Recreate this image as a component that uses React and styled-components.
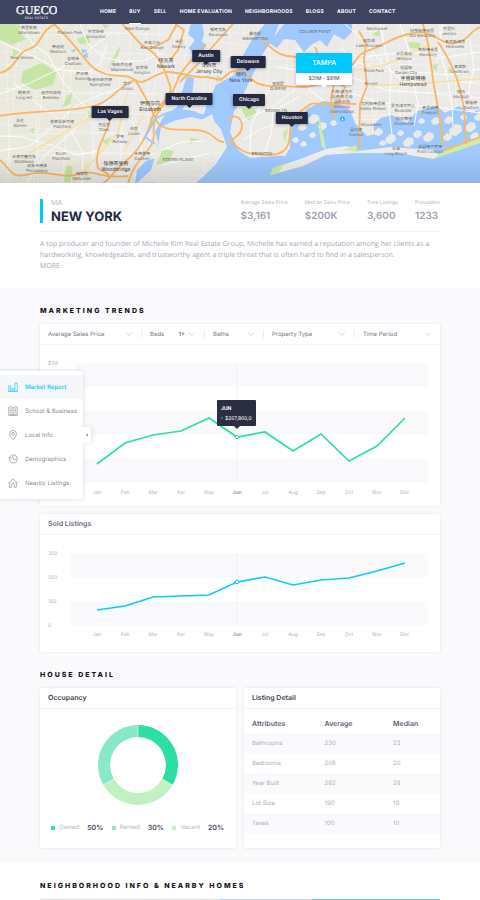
import React from "react";
import styled, { createGlobalStyle, css } from "styled-components";

const GlobalStyle = createGlobalStyle`
  * { box-sizing: border-box; }
  body {
    margin: 0;
    background: #fff;
    color: #23273f;
    font-family: Inter, "Noto Sans CJK SC", sans-serif;
    font-size: 7px;
    text-rendering: geometricPrecision;
  }
  h1, h2, h3, p, dl, dd, ul { margin: 0; padding: 0; }
  button, select { font-family: inherit; text-rendering: inherit; }
`;

const Page = styled.div`
  position: relative;
  overflow: hidden;
`;

const Header = styled.header`
  display: flex;
  align-items: center;
  height: 24px;
  padding: 0 16px;
  background: #3e435f;
`;

const Logo = styled.a`
  display: block;
  width: 41px;
  height: 18px;
  margin-right: 43px;
  svg { display: block; }
`;

const Nav = styled.nav`
  display: flex;
  align-self: stretch;
  gap: 13px;
`;

const NavLink = styled.a`
  display: flex;
  align-items: center;
  color: #fff;
  font-size: 5px;
  font-weight: 700;
  letter-spacing: 0.05em;
  text-decoration: none;
  white-space: nowrap;
  box-shadow: ${(p) => (p.$active ? "inset 0 -1px #fff" : "none")};
`;

const MapArea = styled.section`
  position: relative;
  height: 159px;
  > svg { display: block; width: 100%; height: 100%; }
`;

const Pin = styled.button`
  position: absolute;
  left: ${(p) => p.$left}%;
  top: ${(p) => p.$top}px;
  transform: translateX(-50%);
  height: 12px;
  padding: 0 6px;
  border: 0;
  border-radius: 1px;
  background: #262a40;
  color: #fff;
  font-size: 5px;
  font-weight: 600;
  line-height: 12px;
  white-space: nowrap;
  box-shadow: 0 1px 3px rgba(20, 24, 50, 0.3);
  &::after {
    content: "";
    position: absolute;
    left: calc(50% - 3px);
    top: 100%;
    border: 3px solid transparent;
    border-top-color: #262a40;
    border-bottom: 0;
  }
`;

const FeaturePin = styled(Pin)`
  width: 56px;
  height: 32px;
  padding: 0;
  background: #fff;
  color: #555a70;
  font-weight: 500;
  &::after { border-top-color: #fff; }
  strong {
    display: block;
    height: 20px;
    border-radius: 1px 1px 0 0;
    background: #00c8ff;
    color: #fff;
    font-size: 7px;
    font-weight: 500;
    line-height: 20px;
  }
`;

const Intro = styled.section`
  height: 105px;
  padding: 16px 40px 0;
`;

const IntroTop = styled.div`
  display: flex;
  justify-content: space-between;
  height: 33px;
  border-bottom: 1px solid #f3f3f6;
`;

const Place = styled.div`
  height: 24px;
  padding-left: 8px;
  border-left: 3px solid #00c8ff;
  color: #b9bcc7;
  line-height: 8px;
  h1 {
    color: #23273f;
    font-size: 13px;
    font-weight: 700;
    line-height: 20px;
  }
`;

const Stats = styled.dl`
  display: flex;
  gap: 17px;
`;

const Stat = styled.div`
  dt { color: #b4b7c2; font-size: 5px; line-height: 8px; }
  dd { color: #9c9fae; font-size: 10px; font-weight: 600; line-height: 18px; }
`;

const Bio = styled.p`
  padding-top: 7px;
  color: #a5a8b5;
  font-family: "Open Sans", sans-serif;
  line-height: 11px;
`;

const MoreLink = styled.a`
  display: block;
  color: inherit;
  text-decoration: none;
`;

const Content = styled.main`
  padding: 0 40px 15px;
  background: #fafafc;
`;

const SectionTitle = styled.h2`
  padding: 15px 0 5px;
  color: #14151c;
  font-size: 7px;
  font-weight: 800;
  letter-spacing: 2px;
  line-height: 16px;
`;

const Card = styled.section`
  min-width: 0;
  border-radius: 2px;
  background: #fff;
  box-shadow: 0 0 3px rgba(60, 66, 110, 0.12);
  & + & { margin-top: 8px; }
  > svg { display: block; width: 100%; }
`;

const CardTitle = styled.h3`
  height: 21px;
  padding: 0 8px;
  border-bottom: 1px solid #f4f4f7;
  color: ${(p) => (p.$soft ? "#686c82" : "#3c4158")};
  font-size: 7px;
  font-weight: 600;
  line-height: 20px;
`;

const Filters = styled.form`
  display: grid;
  grid-template-columns: 101fr 63fr 59fr 91fr 86fr;
  align-items: center;
  height: 21px;
  border-bottom: 1px solid #f4f4f7;
`;

const Filter = styled.label`
  display: flex;
  align-items: center;
  min-width: 0;
  height: 8px;
  padding: 0 8px;
  color: #747889;
  font-size: 6px;
  & + & { border-left: 1px solid #eeeef2; }
  svg { flex: none; }
`;

const Select = styled.select`
  flex: 1;
  min-width: 0;
  padding: 0;
  border: 0;
  outline-offset: 2px;
  background: transparent;
  color: inherit;
  font-size: 6px;
  font-weight: ${(p) => (p.$strong ? 600 : 400)};
  text-align: ${(p) => (p.$strong ? "right" : "left")};
  appearance: none;
  ${(p) => p.$strong && css`margin-right: 3px;`}
`;

const ChartText = styled.text`
  fill: ${(p) => (p.$strong ? "#8e92a2" : "#b2b5c1")};
  font-size: 5px;
  font-weight: ${(p) => (p.$strong ? 600 : 400)};
`;

const TipText = styled.text`
  fill: #fff;
  font-size: 5px;
  font-weight: ${(p) => (p.$strong ? 700 : 400)};
`;

const Columns = styled.div`
  display: grid;
  grid-template-columns: 1fr 1fr;
  gap: 8px;
`;

const Panel = styled.section`
  min-width: 0;
  border-radius: 2px;
  background: #fff;
  box-shadow: 0 0 3px rgba(60, 66, 110, 0.12);
`;

const Donut = styled.div`
  display: flex;
  justify-content: center;
  padding: 16px 0 18px;
`;

const Legend = styled.ul`
  display: flex;
  justify-content: space-between;
  padding: 0 12px 15px 11px;
  list-style: none;
`;

const LegendItem = styled.li`
  display: flex;
  align-items: center;
  color: #b4b7c2;
  font-size: 6px;
  line-height: 10px;
  &::before {
    content: "";
    width: 4px;
    height: 4px;
    margin-right: 4px;
    border-radius: 1px;
    background: ${(p) => p.$color};
  }
  strong { margin-left: 8px; color: #454a60; font-size: 7px; font-weight: 600; }
`;

const Table = styled.table`
  width: 100%;
  margin-top: 4px;
  border-collapse: collapse;
  table-layout: fixed;
  th, td { height: 20px; padding: 0 0 0 8px; text-align: left; }
  th { color: #5b5f74; font-size: 7px; font-weight: 600; }
  td { color: #acafbb; font-size: 6px; }
  th:first-child { width: 37%; }
  th:nth-child(2) { width: 35%; }
  tbody tr:nth-child(odd) { background: #fafafc; }
`;

const Nearby = styled.section`
  padding: 0 40px;
`;

const NearbyStrip = styled.div`
  height: 1px;
  background: linear-gradient(90deg, #dcdcdc 0 45%, #b9cdfa 45% 68%, #54d0ef 68%);
`;

const SidePanel = styled.aside`
  position: absolute;
  top: 371px;
  left: 0;
  width: 83px;
  padding: 4px 0;
  border-radius: 0 2px 2px 0;
  background: rgba(255, 255, 255, 0.97);
  box-shadow: 0 0 5px rgba(40, 45, 90, 0.16);
`;

const SideLink = styled.a`
  display: flex;
  align-items: center;
  gap: 7px;
  height: 24px;
  padding-left: 8px;
  background: ${(p) => (p.$active ? "#f6f7fb" : "transparent")};
  color: ${(p) => (p.$active ? "#19ccff" : "#8b8e9e")};
  font-size: 6px;
  font-weight: ${(p) => (p.$active ? 600 : 400)};
  text-decoration: none;
  white-space: nowrap;
`;

const Toggle = styled.button`
  position: absolute;
  top: 56px;
  left: 100%;
  display: flex;
  align-items: center;
  justify-content: center;
  width: 8px;
  height: 16px;
  padding: 0;
  border: 0;
  border-radius: 0 2px 2px 0;
  background: #fff;
  box-shadow: 2px 0 4px rgba(40, 45, 90, 0.1);
`;

const Chevron = () => (
  <svg width="8" height="8" viewBox="0 0 8 8" fill="none" stroke="#c4c6d0" strokeWidth="0.7" aria-hidden="true">
    <path d="M1.2 2.4 4 5.4 6.8 2.4" />
  </svg>
);

const icons = {
  report: (
    <>
      <path d="M1 5h2.4v7H1zM5 8.5h2.4V12H5zM9 1.5h3V12H9z" />
      <path d="M.5 12.5h12" />
    </>
  ),
  school: (
    <>
      <path d="M6.5 2.2C4.8 1 2.8 1 1 1.5v9.3c1.8-.4 3.8-.4 5.5.8 1.7-1.2 3.7-1.2 5.5-.8V1.5C10.2 1 8.2 1 6.5 2.2zM6.5 2.2v9.4" />
      <path d="M2.5 3.8H5M2.5 5.8H5M2.5 8H5M8 3.8h2.5M8 5.8h2.5M8 8h2.5M.4 12.3h12.2" />
    </>
  ),
  local: (
    <>
      <path d="M6.5 12.5C4 9 2 7 2 5a4.5 4.5 0 0 1 9 0c0 2-2 4-4.5 7.5z" />
      <circle cx="6.5" cy="4.9" r="1.8" />
    </>
  ),
  demo: (
    <>
      <path d="M5 1.5A5.3 5.3 0 1 0 12 8" />
      <path d="M6.5 1a5.5 5.5 0 0 1 5.7 5.6L7.5 7.2 6.2 4z" />
      <path d="M1 4l3.8 2.5" />
    </>
  ),
  home: (
    <>
      <path d="M.6 6.7 6.5 1l5.9 5.7" />
      <path d="M2.2 5.5V12h2.6V8.5a1.7 1.7 0 0 1 3.4 0V12h2.6V5.5" />
    </>
  ),
};

const sideItems = [
  ["report", "Market Report"],
  ["school", "School & Business"],
  ["local", "Local Info"],
  ["demo", "Demographics"],
  ["home", "Nearby Listings"],
];

const navItems = ["HOME", "BUY", "SELL", "HOME EVALUATION", "NEIGHBORHOODS", "BLOGS", "ABOUT", "CONTACT"];

const pins = [
  ["Austin", 206, 26],
  ["Delaware", 248, 32],
  ["North Carolina", 189, 69],
  ["Chicago", 249, 70],
  ["Houston", 292, 88],
  ["Las Vages", 110, 82],
];

const stats = [
  ["Average Sales Price", "$3,161"],
  ["Median Sales Price", "$200K"],
  ["Total Listings", "3,600"],
  ["Population", "1233"],
];

const mapLabels = [
  [29, 29, "莫里斯敦", "Morristown"], [70, 29, "", "Florham Park"], [96, 33, "利文斯顿", "Livingston"],
  [137, 25, "", "West Orange"], [152, 44, "东奥兰治", "East Orange"], [179, 43, "卡尼", "Kearny"],
  [218, 31, "锡考克斯", "Secaucus"], [58, 48, "麦迪逊", "Madison"], [73, 60, "查塔姆", "Chatham"],
  [22, 54, "", "New Vernon"], [122, 66, "梅普尔伍德", "Maplewood"], [142, 69, "欧文顿", "Irvington"],
  [82, 75, "萨米特", "Summit"], [100, 81, "斯普林菲尔德", "Springfield"], [127, 85, "尤宁", "Union"],
  [24, 94, "朗希尔", "Long Hill"], [51, 94, "伯克利高地", "Berkeley"], [20, 122, "沃伦", "Warren"],
  [62, 123, "普莱恩菲尔德", "Plainfield"], [104, 126, "克拉克", "Clark"], [134, 130, "林登", "Linden"],
  [120, 138, "罗韦", "Rahway"], [61, 150, "", "South"], [61, 155, "", "Plainfield "], [24, 158, "米德尔塞克斯", "Middlesex"],
  [37, 167, "皮斯卡特维", "Piscataway"], [82, 175, "梅塔钦", "Metuchen"], [142, 155, "卡特雷特", "Carteret"],
  [255, 35, "曼哈顿", "MANHATTAN"], [315, 28, "", "COLLEGE POINT"], [369, 42, "成功湖", "Lake Success"],
  [377, 25, "", "Manhasset"], [422, 32, "旧韦斯特伯里", "Old Westbury"], [449, 30, "杰里科", "Jericho"],
  [455, 43, "希克斯维尔", "Hicksville"], [404, 55, "米尼奥拉", "Mineola"], [428, 51, "韦斯特伯里", "Westbury"],
  [374, 67, "", "Floral Park"], [406, 69, "花园城", "Garden City"], [460, 68, "莱维敦", "Levittown"],
  [371, 80, "", "Elmont"], [461, 93, "旺托", "Wantagh"], [373, 105, "瓦利斯特里姆", "Valley Stream"],
  [403, 107, "罗克维尔中心", "Rockville"], [430, 109, "弗里波特", "Freeport"], [471, 104, "锡福德", "Seaford"],
  [404, 120, "欧申赛德", "Oceanside"], [371, 121, "", "Woodmere"], [356, 131, "因伍德", "Inwood"],
  [396, 150, "长滩", "Long Beach"], [430, 148, "波因特卢考特", "Point Lookout"], [276, 107, "", "BROOKLYN"],
  [278, 85, "皇后区", "QUEENS"], [262, 150, "", "BRIGHTON"], [178, 156, "", "STATEN ISLAND"],
];

const bigLabels = [
  [166, 62, "纽瓦克", "Newark"], [209, 67, "泽西市", "Jersey City"], [241, 76, "纽约", "New York"],
  [150, 105, "伊丽莎白", "Elizabeth"], [116, 165, "伍德布里奇", "Woodbridge"], [413, 80, "亨普斯特德", "Hempstead"],
];

const parks = [
  "0,24 22,24 19,31 26,39 12,45 0,40", "23,71 42,63 57,72 53,85 35,90 21,82", "112,60 121,44 118,56 108,69",
  "13,49 20,52 13,57", "77,39 88,35 91,43 80,44", "67,96 73,92 70,104 62,108", "66,165 73,167 70,183 64,182",
  "101,141 112,137 107,145", "253,59 265,31 268,32 258,56",
  "329,33 341,28 338,37", "408,42 420,43 421,49 410,48", "432,65 438,64 436,72", "217,75 222,78 216,83",
  "344,107 349,108 347,112", "389,120 396,127 393,133", "449,66 453,71 448,74", "102,24 110,25 105,29",
  "30,130 35,127 33,134", "88,111 94,116 88,119", "150,117 156,121 151,126", "287,24 293,24 288,36", "372,34 380,30 380,37",
];

const orangeRoads = [
  "M0 73C18 68 15 53 29 49S39 30 56 24", "M54 24C67 36 73 44 81 54S93 70 106 74 125 73 135 80 154 72 168 72 193 79 207 77",
  "M135 80C114 89 116 98 97 105S22 111 0 116", "M122 24C136 36 135 42 148 49S166 74 170 86 156 104 152 118 142 148 126 161 110 180 103 183",
  "M205 44C193 60 181 69 176 84S159 106 155 119 158 138 148 150 133 167 128 183", "M233 24 214 45 197 65 180 82",
  "M135 80C145 95 151 108 156 120S178 129 196 130 214 142 224 142", "M110 119C108 132 98 143 97 158S103 169 109 175",
  "M0 160C13 171 10 179 30 174S63 180 78 174 101 180 128 176", "M230 122C232 112 241 117 242 125S233 140 229 141",
  "M230 141C240 149 242 153 255 154S281 157 287 147 285 124 300 112 311 104 324 104 346 103 356 104",
  "M262 39C269 46 276 54 287 56S318 57 338 65 352 55 367 51 391 37 413 33 440 46 455 43 468 32 480 27",
  "M359 31 366 44 364 59 367 86 360 104 359 148", "M423 24 428 44 431 64 434 86 438 108 441 128 443 146",
  "M438 42C453 64 460 83 463 104S465 126 466 144", "M315 47 324 69 334 84 331 98 334 118",
  "M240 70C251 75 252 87 274 86S305 91 324 82", "M326 60 329 78 345 87 338 104", "M207 77 221 80 230 72 240 70",
  "M177 24 168 40 154 47 149 49", "M175 24 184 30 178 50 170 60", "M443 151 480 137",
];

const whiteRoads = [
  "M0 42 35 57 61 70 88 72 101 63 107 44", "M20 24 33 44 48 55 62 80 76 97 97 117", "M0 94 30 83 59 69 85 53 114 31",
  "M0 151 30 146 57 123 77 105 102 94 128 85", "M27 183 44 156 68 136 88 115 112 99", "M82 183 83 153 67 124 40 106 14 83",
  "M80 24 88 44 105 58 122 61 143 61 164 52", "M104 105 125 115 140 131 142 151", "M0 136 22 137 51 145 77 155 104 150",
  "M161 151 181 142 206 141", "M163 165 190 158 210 153", "M240 122 258 113 279 108 299 97", "M243 140 263 128 285 121",
  "M250 154 251 126 261 105 274 80", "M265 152 272 130 273 107 294 90", "M277 67 309 72 347 75 369 84 386 90 428 93 480 98",
  "M340 48 362 64 389 72 415 72 449 75 480 69", "M348 92 380 103 407 105 430 106 480 113", "M380 24 385 49 391 73 389 110 392 135",
  "M400 24 408 47 412 75 418 104 414 126", "M442 24 439 49 446 72 452 105 453 126", "M345 24 365 42 380 61 399 78 424 83 457 81 480 84",
  "M470 40 474 68 468 93 480 113", "M300 49 303 65 310 91 325 101", "M350 69 366 57 391 53 415 52 446 57 480 52",
];

const islands = [
  [313, 119, 5], [322, 126, 4], [302, 127, 4], [312, 135, 3], [333, 123, 3], [378, 132, 4], [390, 139, 5], [400, 133, 3],
  [408, 142, 5], [417, 134, 4], [428, 137, 5], [421, 121, 3], [435, 121, 4], [448, 120, 4], [455, 130, 6], [470, 127, 5],
  [474, 136, 4], [447, 137, 4], [463, 117, 3], [382, 143, 3], [295, 140, 3], [478, 117, 4], [303, 144, 3],
];

function CityMap() {
  const grid = [];
  for (let x = 6; x < 480; x += 14) grid.push(`M${x} 24l${(x % 4) * 9 - 14} 159`);
  for (let y = 28; y < 183; y += 12) grid.push(`M0 ${y}q120 ${(y % 5) * 8 - 16} 240 ${(y % 3) * 5}t240 ${(y % 4) * 3}`);
  return (
    <svg viewBox="0 24 480 159" preserveAspectRatio="none" role="img" aria-label="Map of the New York area">
      <defs>
        <linearGradient id="sea" x1="0" y1="0" x2="0" y2="1">
          <stop offset="0.82" stopColor="#000" stopOpacity="0" />
          <stop offset="1" stopColor="#000" stopOpacity="0.1" />
        </linearGradient>
      </defs>
      <rect y="24" width="480" height="159" fill="#ebeae7" />
      <rect y="24" width="90" height="159" fill="#eae8d8" opacity="0.6" />
      <path d={grid.join("")} fill="none" stroke="#f6f6f4" strokeWidth="0.6" />
      {parks.map((p) => <polygon key={p} points={p} fill="#c7e5a5" />)}
      <g fill="#a0c9ff">
        <path d="M191 24h11l2 9-2 9 5 3-6 9-8 1-4-7 6-8-7-6zM265 24h14l-5 13-10 15-9 18-10 21-10 20-3 12 6 14 9 16 38 3 5-8-1-17 9-11 9-11 16-8 15 2 12 7 5 13 12 13 8-2-2-9 8-7 11-3 15 8 10-12 20-5 8 7 14-7 13 7 15-8v84H189l14-12 13-13 11-17-6-18-10-11-8-1 4-13 9-19 18-10 7-16 12-21z" />
        <path d="M284 24h68v8l-8 8-10-6-7 13-7-7-9 5-7 7-9-12-11-1-7 9-8-5 8-10z" />
        <path d="M187 76l7 2-2 18-10 14 20 4 8 4-5 2-14-3-14 3-10 8-9 21 3 12-8 9 3 13h-21l2-13 9-9 10-3 2-16-3-10 9-16 13-9z" />
        <path d="M81 49l6 1 1 8-4-1zM71 50l5-1-2 4z" />
      </g>
      <path d="M212 114 221 141 210 157 188 181 137 183 151 170 158 146 161 127 176 120 194 124z" fill="#eceae5" />
      <path d="M234 111 258 90 284 94 296 112 289 128 286 155 250 158 239 151 230 132z" fill="#eceae6" />
      <path d="M163 149 174 151 168 162 156 165zM190 138 199 139 190 144zM241 109 251 105 257 113 248 121zM283 133 288 128 285 143z" fill="#c7e5a5" />
      {islands.map(([x, y, r]) => (
        <path key={`${x}-${y}`} d={`M${x - r} ${y}l${r} ${-r}l${r} 1l1 ${r}l${-r} ${r - 1}l${-r} -1z`} fill="#ebebe5" />
      ))}
      <path d="M270 175 274 168 303 158 326 149 347 146 358 151 390 147 433 150 439 155 434 159 396 153 354 153 326 155 303 166 278 173z" fill="#eeeee8" />
      <path d="M270 175 273 168 284 164 279 172zM319 114l4 20 3 15-4-2-3-16zM343 150l13-5 2 7zM434 159 443 151 480 138v5L445 155z" fill="#d2eba7" />
      <g fill="none" stroke="#fff" strokeWidth="0.9">
        {whiteRoads.map((d) => <path key={d} d={d} />)}
      </g>
      <path d="M73 183 118 133 127 93M30 153 90 117M125 150 143 115M329 75 385 65 430 45M369 86 426 83 480 79" fill="none" stroke="#fae0a0" strokeWidth="1.6" />
      <g fill="none" stroke="#fab663" strokeWidth="1.8">
        {orangeRoads.map((d) => <path key={d} d={d} />)}
      </g>
      <path d="M155 119q20-13 42-6M155 119q-6 12-10 18l10 7" fill="none" stroke="#a0c9ff" strokeWidth="2" />
      <g textAnchor="middle" fill="#6a6a6a">
        {mapLabels.map(([x, y, cjk, latin]) => (
          <text key={latin} fontSize="4">
            <tspan x={x} y={y}>{cjk}</tspan>
            <tspan x={x} y={y + 5}>{latin}</tspan>
          </text>
        ))}
      </g>
      <g textAnchor="middle" fill="#404040">
        {bigLabels.map(([x, y, cjk, latin]) => (
          <text key={latin} fontSize="5">
            <tspan x={x} y={y}>{cjk}</tspan>
            <tspan x={x} y={y + 6}>{latin}</tspan>
          </text>
        ))}
        <text fontSize="4" fill="#766">
          <tspan x="342" y="93">约翰·菲茨杰</tspan>
          <tspan x="342" y="98">拉德·肯尼迪</tspan>
          <tspan x="342" y="103">国际机场</tspan>
          <tspan x="342" y="108">Kennedy</tspan>
          <tspan x="342" y="113">International</tspan>
        </text>
      </g>
      <circle cx="342.5" cy="119" r="2.5" fill="#25b7ef" />
      <path d="M341.5 120.3 342.5 117.5 343.5 120.3z" fill="#fff" />
      <rect y="24" width="480" height="159" fill="url(#sea)" />
    </svg>
  );
}

const months = ["Jan", "Feb", "Mar", "Apr", "May", "Jun", "Jul", "Aug", "Sep", "Oct", "Nov", "Dec"];

function LineChart({ title, height, left, bands, yLabels, monthY, values, color, tip }) {
  const points = values.map((v, i) => [57 + i * 28, v]);
  const [jx, jy] = points[5];
  return (
    <svg viewBox={`0 0 400 ${height}`} role="img" aria-label={title}>
      {bands.map((y) => <rect key={y} x={left} y={y} width={388 - left} height="24" fill="#fafafc" />)}
      {yLabels.map(([label, y]) => <ChartText key={label} x="8" y={y + 2}>{label}</ChartText>)}
      <path d={`M${jx} ${bands[0]}V${monthY - 9}`} stroke="#dcdde4" strokeWidth="0.6" strokeDasharray="1 1" />
      <polyline points={points.join(" ")} fill="none" stroke={color} strokeWidth="1.7" />
      <circle cx={jx} cy={jy} r="1.7" fill="#fff" stroke={color} />
      {months.map((m, i) => (
        <ChartText key={m} x={57 + i * 28} y={monthY + 2} textAnchor="middle" $strong={m === "Jun"}>{m}</ChartText>
      ))}
      {tip && (
        <g>
          <rect x="177" y="55" width="39" height="26" rx="1" fill="#2b2e43" />
          <path d="M194 81h6l-3 3z" fill="#2b2e43" />
          <TipText x="181" y="65" $strong>JUN</TipText>
          <circle cx="182" cy="73" r="0.8" fill={color} />
          <TipText x="185" y="75">{tip}</TipText>
        </g>
      )}
    </svg>
  );
}

const rows = [
  ["Bathrooms", 230, 23],
  ["Bedrooms", 208, 20],
  ["Year Built", 282, 28],
  ["Lot Size", 190, 19],
  ["Taxes", 100, 10],
];

function FilterSelect({ name }) {
  return (
    <Filter>
      <Select aria-label={name} defaultValue={name}><option>{name}</option></Select>
      <Chevron />
    </Filter>
  );
}

export default function App() {
  return (
    <Page>
      <GlobalStyle />
      <Header>
        <Logo href="#" aria-label="Gueco Real Estate">
          <svg width="41" height="18" viewBox="0 0 41 18" fill="#fff">
            <text x="0" y="11" fontFamily="Liberation Serif, serif" fontSize="12" stroke="#fff" strokeWidth="0.3">GUECO</text>
            <text x="20.5" y="15.5" fontSize="3" letterSpacing="0.4" textAnchor="middle">REAL ESTATE</text>
          </svg>
        </Logo>
        <Nav>
          {navItems.map((n) => <NavLink key={n} href="#" $active={n === "BUY"}>{n}</NavLink>)}
        </Nav>
      </Header>

      <MapArea>
        <CityMap />
        {pins.map(([name, x, y]) => <Pin key={name} $left={x / 4.8} $top={y}>{name}</Pin>)}
        <FeaturePin $left={67.5} $top={29}><strong>TAMPA</strong>$31M - $91M</FeaturePin>
      </MapArea>

      <Intro>
        <IntroTop>
          <Place>MA<h1>NEW YORK</h1></Place>
          <Stats>
            {stats.map(([k, v]) => <Stat key={k}><dt>{k}</dt><dd>{v}</dd></Stat>)}
          </Stats>
        </IntroTop>
        <Bio>
          A top producer and founder of Michelle Kim Real Estate Group, Michelle has earned a reputation among her clients as a<br />
          hardworking, knowledgeable, and trustworthy agent a triple threat that is often hard to find in a salesperson.
          <MoreLink href="#">MORE</MoreLink>
        </Bio>
      </Intro>

      <Content>
        <SectionTitle>MARKETING TRENDS</SectionTitle>
        <Card>
          <Filters>
            <FilterSelect name="Average Sales Price" />
            <Filter>
              Beds
              <Select $strong defaultValue="1+"><option>1+</option><option>2+</option></Select>
              <Chevron />
            </Filter>
            <FilterSelect name="Baths" />
            <FilterSelect name="Property Type" />
            <FilterSelect name="Time Period" />
          </Filters>
          <LineChart
            title="Average sales price by month"
            height={161}
            left={35}
            bands={[18, 66, 114]}
            yLabels={[["$1M", 18]]}
            monthY={147}
            values={[119, 98, 90, 86, 73, 92, 87, 106, 89, 116, 101, 73]}
            color="#2adf9f"
            tip="$267,860,0"
          />
        </Card>
        <Card>
          <CardTitle $soft>Sold Listings</CardTitle>
          <LineChart
            title="Sold listings by month"
            height={117}
            left={30}
            bands={[18, 66]}
            yLabels={[["300", 18], ["200", 42], ["100", 66], ["0", 90]]}
            monthY={99}
            values={[75, 71, 62, 61, 60, 47, 42, 50, 45, 43, 36, 28]}
            color="#0cc8fc"
          />
        </Card>
        <SectionTitle>HOUSE DETAIL</SectionTitle>
        <Columns>
          <Panel>
            <CardTitle>Occupancy</CardTitle>
            <Donut>
              <svg width="80" height="80" viewBox="-40 -40 80 80" fill="none" strokeWidth="12" role="img" aria-label="Occupancy by type">
                <path d="M0-34A34 34 0 0 1 29.4 17" stroke="#2adf9f" />
                <path d="M29.4 17A34 34 0 0 1-29.4 17" stroke="#c1f1c1" />
                <path d="M-29.4 17A34 34 0 0 1 0-34" stroke="#89e8c7" />
                <path d="M0-28V-40M24.2 14 34.6 20M-24.2 14-34.6 20" stroke="#fff" strokeWidth="0.5" />
              </svg>
            </Donut>
            <Legend>
              <LegendItem $color="#2adf9f">Owned<strong>50%</strong></LegendItem>
              <LegendItem $color="#89e8c7">Rented<strong>30%</strong></LegendItem>
              <LegendItem $color="#c1f1c1">Vacant<strong>20%</strong></LegendItem>
            </Legend>
          </Panel>
          <Panel>
            <CardTitle>Listing Detail</CardTitle>
            <Table>
              <thead><tr><th>Attributes</th><th>Average</th><th>Median</th></tr></thead>
              <tbody>
                {rows.map(([a, b, c]) => <tr key={a}><td>{a}</td><td>{b}</td><td>{c}</td></tr>)}
              </tbody>
            </Table>
          </Panel>
        </Columns>
      </Content>

      <Nearby>
        <SectionTitle>NEIGHBORHOOD INFO &amp; NEARBY HOMES</SectionTitle>
        <NearbyStrip />
      </Nearby>

      <SidePanel>
        <nav>
          {sideItems.map(([icon, label]) => (
            <SideLink key={icon} href="#" $active={icon === "report"}>
              <svg width="10" height="10" viewBox="0 0 13 13" fill="none" stroke="currentColor" strokeWidth="0.9">{icons[icon]}</svg>
              {label}
            </SideLink>
          ))}
        </nav>
        <Toggle aria-label="Collapse panel">
          <svg width="4" height="4" viewBox="0 0 4 4" fill="#868a9a"><path d="M3 .5v3L1 2z" /></svg>
        </Toggle>
      </SidePanel>
    </Page>
  );
}
